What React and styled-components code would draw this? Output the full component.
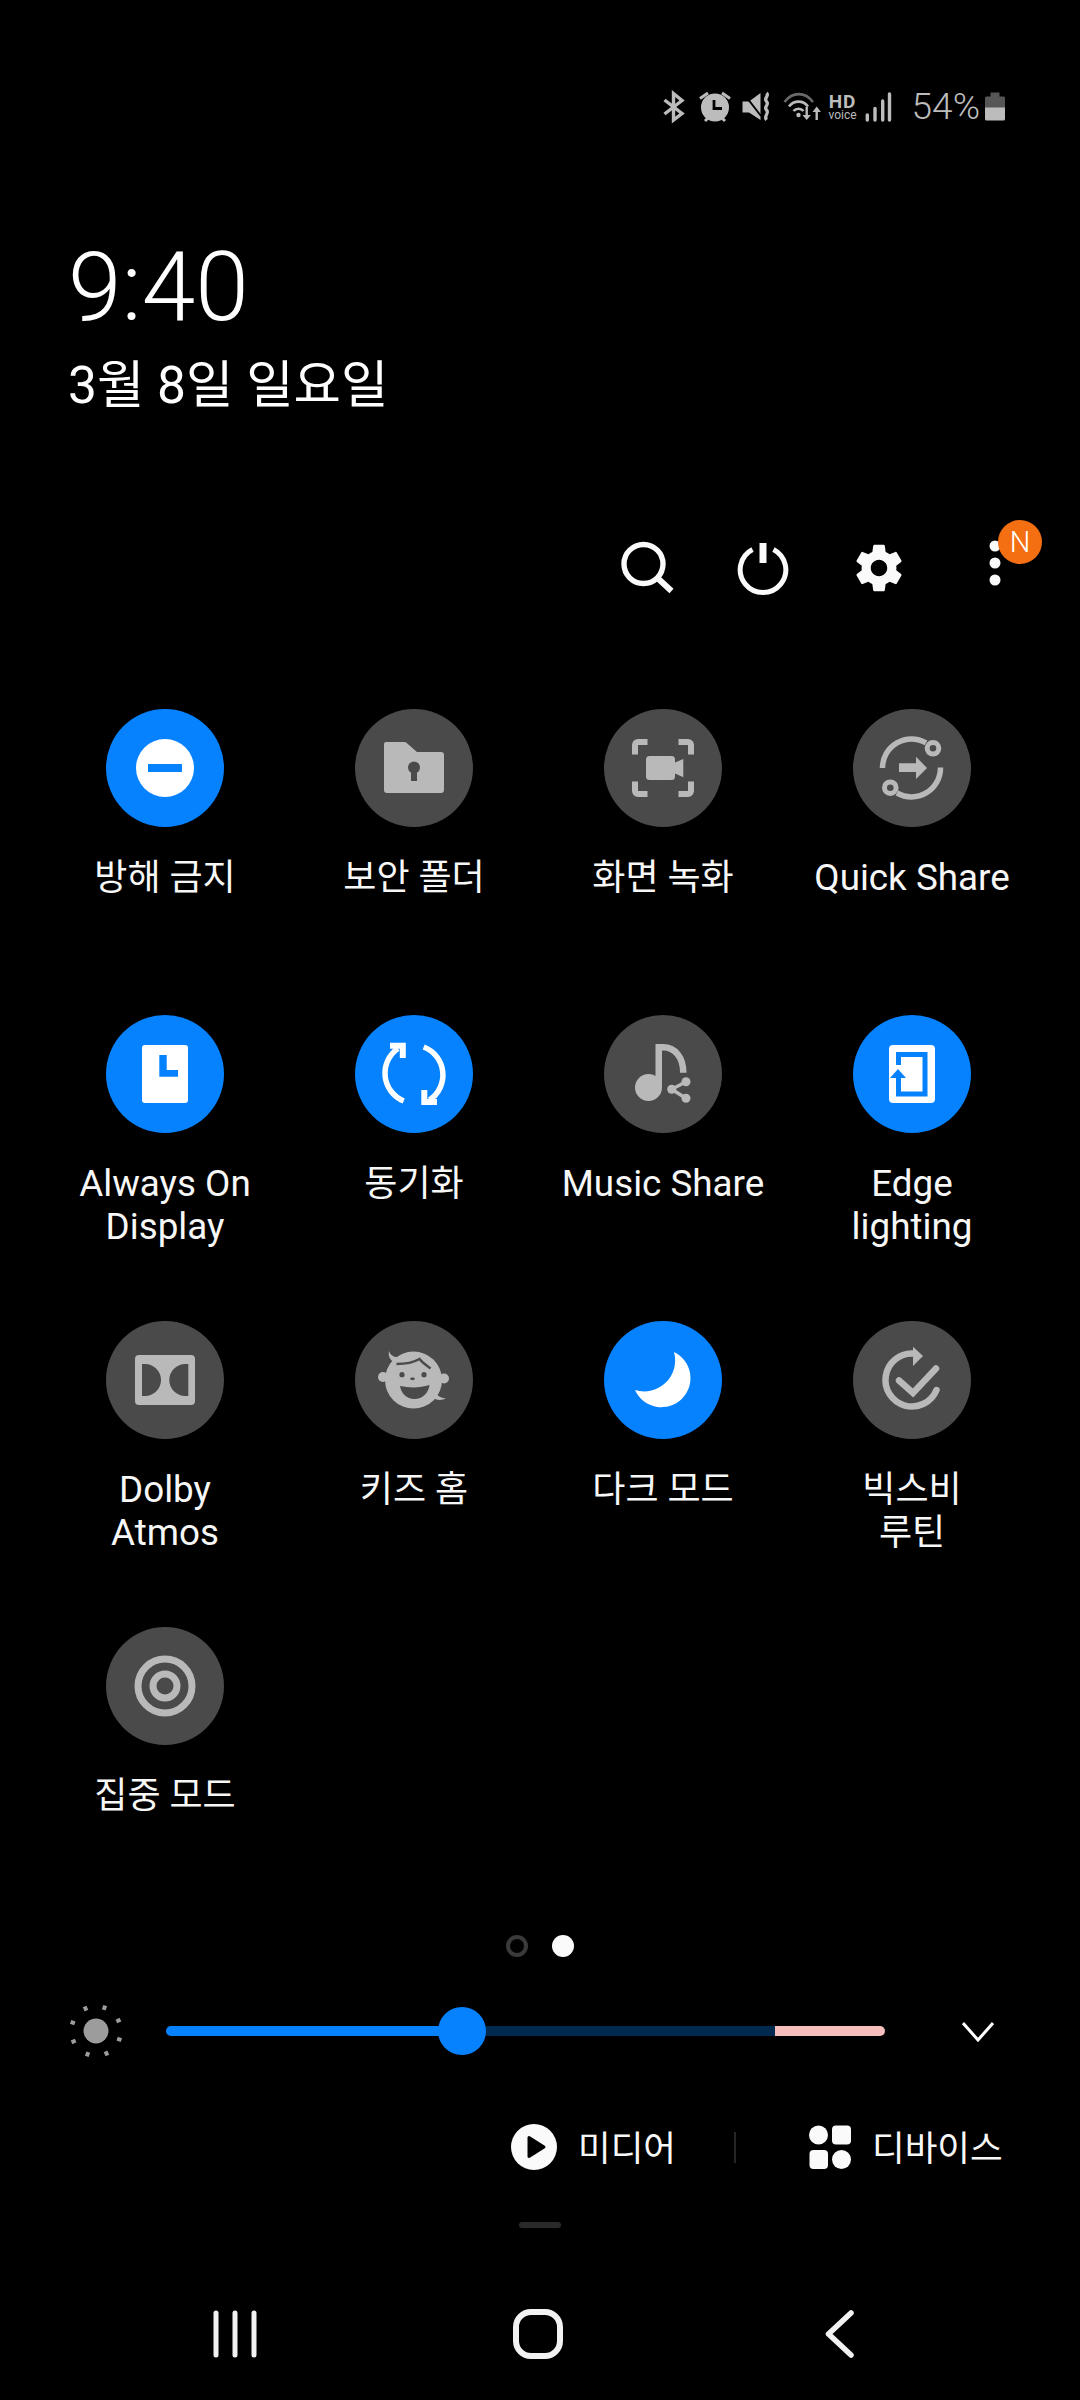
import React from "react"
import styled, { createGlobalStyle } from "styled-components"

const GRAY = "#b9b9b9"
const TILE_OFF = "#4a4a4a"
const BLUE = "#0782ff"
const STATUS = "#bcbcbc"

const GlobalStyle = createGlobalStyle`
  html, body {
    margin: 0;
    padding: 0;
    background: #000;
  }
  * {
    box-sizing: border-box;
  }
`

export default function App() {
  return (
    <>
      <GlobalStyle />
      <Page>
        <StatusBar>
          <StatusSvg $w={24} viewBox="0 0 24 40">
            <path d="M2.5 13 20 26.5 11.5 33V6.5L20 13.5 2.5 27" fill="none" stroke={STATUS} strokeWidth="3.4" />
          </StatusSvg>
          <StatusSvg $w={36} $ml={11} viewBox="0 0 36 40">
            <circle cx="18" cy="20.5" r="14" fill={STATUS} />
            <path d="M17 13v8.5h8" fill="none" stroke="#000" strokeWidth="2.8" />
            <path d="M3 11.5 11 6M33 11.5 25 6M8 34l3.5-3.5M28 34l-3.5-3.5" stroke={STATUS} strokeWidth="3" />
          </StatusSvg>
          <StatusSvg $w={32} $ml={8} viewBox="0 0 32 40">
            <path d="M1.500 14.500h6.500l11.500-8.500v27L8 25.500H1.500z" fill={STATUS} />
            <path d="M3 7 20 29" stroke="#000" strokeWidth="2" />
            <path d="M25.500 6c3.500 3-3.500 5 0 8.500s-3.500 5 0 8.500-3.500 5.500 0 10" fill="none" stroke={STATUS} strokeWidth="3.200" />
          </StatusSvg>
          <StatusSvg $w={38} $ml={10} viewBox="0 0 38 40">
            <path d="M1.500 15C9.500 4.500 22 4.500 30 15" fill="none" stroke="#6a6a6a" strokeWidth="2.6" />
            <path d="M6 19.500C11 13 20 13 25 19.500" fill="none" stroke={STATUS} strokeWidth="2.6" />
            <path d="M10.500 24C13 21 18 21 20.500 24" fill="none" stroke={STATUS} strokeWidth="2.6" />
            <circle cx="15.500" cy="28" r="2.200" fill={STATUS} />
            <path d="M23.700 20v11M33.700 33V22" stroke={STATUS} strokeWidth="2.4" />
            <path d="M19.500 28h8.400l-4.200 5zM29.500 25h8.400l-4.200-5.500z" fill={STATUS} />
          </StatusSvg>
          <HdBadge>
            <HdMain>HD</HdMain>
            <HdSub>voice</HdSub>
          </HdBadge>
          <StatusSvg $w={28} $ml={6} viewBox="0 0 28 40">
            <path d="M2.300 28v5M10 21.500V33M17.700 14V33M24.500 7V33" stroke={STATUS} strokeWidth="3.400" strokeLinecap="round" />
          </StatusSvg>
          <BatteryText>54%</BatteryText>
          <StatusSvg $w={22} $ml={4} viewBox="0 0 22 40">
            <path d="M6.500 5.500h9v4h4a1.500 1.500 0 0 1 1.500 1.500v10H1V11a1.500 1.500 0 0 1 1.500-1.500h4z" fill="#565656" />
            <path d="M1 20.500h20V32a1.500 1.500 0 0 1-1.500 1.500h-17A1.500 1.500 0 0 1 1 32z" fill={STATUS} />
          </StatusSvg>
        </StatusBar>

        <ClockBlock>
          <Time>9:40</Time>
          <DateLine>3월 8일 일요일</DateLine>
        </ClockBlock>

        <Toolbar>
          <ToolSlot>
            <svg width="60" height="60" viewBox="0 0 60 60">
              <circle cx="26.500" cy="26" r="19.500" fill="none" stroke="#fafafa" strokeWidth="5.400" />
              <path d="M41 40.500 54.500 53" stroke="#fafafa" strokeWidth="6" />
            </svg>
          </ToolSlot>
          <ToolSlot>
            <svg width="60" height="60" viewBox="0 0 60 60">
              <path d="M19.500 11.500a22.800 22.800 0 1 0 21 0" fill="none" stroke="#fafafa" strokeWidth="5" />
              <path d="M30 5v20" stroke="#fafafa" strokeWidth="7" />
            </svg>
          </ToolSlot>
          <ToolSlot>
            <svg width="58" height="58" viewBox="0 0 24 24">
              <path
                fill="#fafafa"
                d="M19.140 12.940c.04-.3.06-.61.06-.94 0-.32-.02-.64-.07-.94l2.030-1.580c.18-.14.23-.41.12-.61l-1.920-3.320c-.12-.22-.37-.29-.59-.22l-2.390.96c-.5-.38-1.030-.7-1.620-.94l-.36-2.540c-.04-.24-.24-.41-.48-.41h-3.840c-.24 0-.43.17-.47.41l-.36 2.540c-.59.24-1.130.57-1.620.94l-2.390-.96c-.22-.08-.47 0-.59.22L2.740 8.870c-.12.21-.08.47.12.61l2.030 1.580c-.05.3-.09.63-.09.94s.02.64.07.94l-2.030 1.580c-.18.14-.23.41-.12.61l1.920 3.320c.12.22.37.29.59.22l2.390-.96c.5.38 1.030.7 1.620.94l.36 2.540c.05.24.24.41.48.41h3.840c.24 0 .44-.17.47-.41l.36-2.540c.59-.24 1.130-.56 1.620-.94l2.390.96c.22.08.47 0 .59-.22l1.920-3.320c.12-.22.07-.47-.12-.61l-2.010-1.580zM12 15.400c-1.880 0-3.400-1.520-3.400-3.400s1.520-3.400 3.400-3.400 3.400 1.520 3.400 3.400-1.520 3.400-3.400 3.400z"
              />
            </svg>
          </ToolSlot>
          <ToolSlot>
            <svg width="12" height="60" viewBox="0 0 12 60">
              <circle cx="6" cy="8" r="5.500" fill="#fafafa" />
              <circle cx="6" cy="25" r="5.500" fill="#fafafa" />
              <circle cx="6" cy="42" r="5.500" fill="#fafafa" />
            </svg>
            <Badge>N</Badge>
          </ToolSlot>
        </Toolbar>

        <TileGrid>
          {tiles.map((tile) => (
            <Tile key={tile.lines.join(" ")}>
              <TileCircle $on={tile.on}>
                <svg width="118" height="118" viewBox="0 0 118 118">
                  {tile.icon}
                </svg>
              </TileCircle>
              <TileLabel $latin={tile.latin}>
                {tile.lines.map((line) => (
                  <TileLine key={line} $latin={tile.latin}>
                    {line}
                  </TileLine>
                ))}
              </TileLabel>
            </Tile>
          ))}
        </TileGrid>

        <PageDots>
          <PageDot />
          <PageDot $current />
        </PageDots>

        <BrightnessRow>
          <svg width="56" height="56" viewBox="0 0 56 56">
            <circle cx="28" cy="28" r="12.500" fill="#9c9c9c" />
            {[20, 65, 110, 155, 200, 245, 290, 335].map((deg) => (
              <rect key={deg} x="26" y="1" width="4" height="4.500" fill="#9c9c9c" transform={`rotate(${deg} 28 28)`} />
            ))}
          </svg>
          <Track>
            <TrackPart $w={296} $color={BLUE} />
            <TrackPart $w={313} $color="#00294f" />
            <TrackPart $w={110} $color="#f6bfbd" />
            <Thumb />
          </Track>
          <ChevronWrap>
            <svg width="32" height="20" viewBox="0 0 32 20">
              <path d="M1 1 16 18 31 1" fill="none" stroke="#fff" strokeWidth="3" />
            </svg>
          </ChevronWrap>
        </BrightnessRow>

        <MediaRow>
          <svg width="46" height="46" viewBox="0 0 46 46">
            <circle cx="23" cy="23" r="23" fill="#fafafa" />
            <path d="M18 13.500 33 23 18 32.500z" fill="#000" stroke="#000" strokeWidth="3" strokeLinejoin="round" />
          </svg>
          <MediaText>미디어</MediaText>
          <MediaDivider />
          <DeviceIcon>
            <svg width="42" height="44" viewBox="0 0 42 44">
              <circle cx="9.500" cy="10" r="9.500" fill="#fafafa" />
              <rect x="23" y="0.500" width="19" height="19" rx="4" fill="#fafafa" />
              <rect x="0.500" y="25" width="18.500" height="19" rx="4" fill="#fafafa" />
              <circle cx="32.500" cy="34.500" r="9.500" fill="#fafafa" />
            </svg>
          </DeviceIcon>
          <MediaText>디바이스</MediaText>
        </MediaRow>

        <Handle />

        <NavBar>
          <NavSlot>
            <svg width="44" height="50" viewBox="0 0 44 50">
              <path d="M3 4v42M22 4v42M41 4v42" stroke="#f2f2f2" strokeWidth="5" strokeLinecap="round" />
            </svg>
          </NavSlot>
          <NavSlot>
            <svg width="50" height="50" viewBox="0 0 50 50">
              <rect x="3" y="3" width="44" height="44" rx="15" fill="none" stroke="#f2f2f2" strokeWidth="6" />
            </svg>
          </NavSlot>
          <NavSlot>
            <svg width="30" height="50" viewBox="0 0 30 50">
              <path d="M26 4 3.500 25 26 46" fill="none" stroke="#f2f2f2" strokeWidth="5.500" strokeLinecap="round" strokeLinejoin="round" />
            </svg>
          </NavSlot>
        </NavBar>
      </Page>
    </>
  )
}

const Page = styled.div`
  width: 1080px;
  height: 2400px;
  background: #000;
  display: flex;
  flex-direction: column;
  overflow: hidden;
  font-family: Roboto, "Noto Sans CJK KR", sans-serif;
  color: #f7f7f7;
`

const StatusBar = styled.div`
  height: 214px;
  padding-right: 74px;
  display: flex;
  justify-content: flex-end;
  align-items: center;
`

const StatusSvg = styled.svg`
  width: ${(p) => p.$w}px;
  height: 40px;
  margin-left: ${(p) => p.$ml || 0}px;
  flex: none;
`

const HdBadge = styled.div`
  width: 32px;
  margin-left: 6px;
  display: flex;
  flex-direction: column;
  align-items: center;
  color: ${STATUS};
`

const HdMain = styled.span`
  font-size: 19px;
  line-height: 17px;
  font-weight: 700;
  letter-spacing: 1px;
`

const HdSub = styled.span`
  font-size: 12px;
  line-height: 11px;
`

const BatteryText = styled.span`
  margin-left: 19px;
  font-size: 37px;
  line-height: 40px;
  font-weight: 300;
  color: ${STATUS};
`

const ClockBlock = styled.div`
  padding-left: 68px;
  margin-top: 23px;
`

const Time = styled.div`
  font-size: 96.5px;
  line-height: 100px;
  font-weight: 300;
  color: #fff;
`

const DateLine = styled.div`
  margin-top: 19px;
  font-size: 51.5px;
  line-height: 60px;
  color: #fff;
`

const Toolbar = styled.div`
  margin-top: 94px;
  height: 116px;
  padding-right: 27px;
  display: flex;
  justify-content: flex-end;
`

const ToolSlot = styled.div`
  position: relative;
  width: 116px;
  height: 116px;
  display: flex;
  align-items: center;
  justify-content: center;
`

const Badge = styled.div`
  position: absolute;
  left: 61px;
  top: 10px;
  width: 44px;
  height: 44px;
  border-radius: 50%;
  background: #f36f12;
  color: #fff;
  font-size: 29px;
  font-weight: 300;
  line-height: 44px;
  text-align: center;
`

const TileGrid = styled.div`
  margin-top: 83px;
  margin-left: 40.5px;
  display: grid;
  grid-template-columns: repeat(4, 249px);
  grid-auto-rows: 306px;
  height: 1224px;
`

const Tile = styled.div`
  display: flex;
  flex-direction: column;
  align-items: center;
`

const TileCircle = styled.div`
  width: 118px;
  height: 118px;
  border-radius: 50%;
  flex: none;
  background: ${(p) => (p.$on ? BLUE : TILE_OFF)};

  svg {
    display: block;
  }
`

const TileLabel = styled.div`
  margin-top: ${(p) => (p.$latin ? 28.5 : 30)}px;
  text-align: center;
`

const TileLine = styled.div`
  font-size: ${(p) => (p.$latin ? 36.8 : 36)}px;
  line-height: 43px;
  white-space: nowrap;
`

const PageDots = styled.div`
  margin-top: 2px;
  height: 22px;
  display: flex;
  justify-content: center;
  gap: 24px;
`

const PageDot = styled.div`
  width: 22px;
  height: 22px;
  border-radius: 50%;
  background: ${(p) => (p.$current ? "#fafafa" : "transparent")};
  border: ${(p) => (p.$current ? "none" : "4px solid #3a3a3a")};
`

const BrightnessRow = styled.div`
  margin-top: 50px;
  height: 48px;
  padding-left: 68px;
  display: flex;
  align-items: center;
`

const Track = styled.div`
  position: relative;
  margin-left: 42px;
  width: 719px;
  height: 10px;
  border-radius: 5px;
  display: flex;
`

const TrackPart = styled.div`
  width: ${(p) => p.$w}px;
  height: 10px;
  background: ${(p) => p.$color};

  &:first-child {
    border-radius: 5px 0 0 5px;
  }

  &:nth-child(3) {
    border-radius: 0 5px 5px 0;
  }
`

const Thumb = styled.div`
  position: absolute;
  left: 272px;
  top: -19px;
  width: 48px;
  height: 48px;
  border-radius: 50%;
  background: ${BLUE};
`

const ChevronWrap = styled.div`
  margin-left: 77px;
  display: flex;
  margin-top: 2px;
`

const MediaRow = styled.div`
  margin-top: 67px;
  height: 50px;
  padding-left: 511px;
  display: flex;
  align-items: center;
`

const MediaText = styled.span`
  margin-left: 21px;
  padding-top: 4px;
  font-size: 35.5px;
  line-height: 50px;
  color: #f7f7f7;
`

const MediaDivider = styled.div`
  margin-left: 58px;
  width: 2px;
  height: 31px;
  background: #262626;
`

const DeviceIcon = styled.div`
  margin-left: 73px;
  display: flex;
`

const Handle = styled.div`
  margin: 50px 0 0 519px;
  width: 42px;
  height: 6px;
  border-radius: 3px;
  background: #2a2a2a;
`

const NavBar = styled.div`
  margin-top: 81px;
  height: 50px;
  padding-left: 84px;
  display: grid;
  grid-template-columns: repeat(3, 302.5px);
`

const NavSlot = styled.div`
  display: flex;
  justify-content: center;
  align-items: center;
`

const tiles = [
  {
    lines: ["방해 금지"],
    on: true,
    icon: (
      <>
        <circle cx="59" cy="59" r="29" fill="#fff" />
        <rect x="42" y="55" width="34" height="8" fill={BLUE} />
      </>
    ),
  },
  {
    lines: ["보안 폴더"],
    icon: (
      <>
        <path
          d="M31 33h18a4 4 0 0 1 3 1.300L62 43h24a3 3 0 0 1 3 3v35a3 3 0 0 1-3 3H32a3 3 0 0 1-3-3V35a2 2 0 0 1 2-2z"
          fill={GRAY}
        />
        <circle cx="59" cy="58.500" r="6" fill={TILE_OFF} />
        <rect x="56" y="60" width="6" height="12" fill={TILE_OFF} />
      </>
    ),
  },
  {
    lines: ["화면 녹화"],
    icon: (
      <>
        <path
          d="M43.500 33H34a3 3 0 0 0-3 3v9.500M74.500 33H84a3 3 0 0 1 3 3v9.500M43.500 85H34a3 3 0 0 1-3-3v-9.500M74.500 85H84a3 3 0 0 0 3-3v-9.500"
          fill="none"
          stroke={GRAY}
          strokeWidth="6"
        />
        <rect x="42" y="47" width="29" height="24" rx="3.500" fill={GRAY} />
        <path d="M71 53.500 79.300 50V68.300L71 64.500z" fill={GRAY} />
      </>
    ),
  },
  {
    lines: ["Quick Share"],
    latin: true,
    icon: (
      <>
        <path d="M29.500 59A29 29 0 0 1 73 33.800" fill="none" stroke={GRAY} strokeWidth="5.500" />
        <path d="M87.500 58.500A29 29 0 0 1 44 84" fill="none" stroke={GRAY} strokeWidth="5.500" />
        <circle cx="80" cy="39.300" r="5.800" fill="none" stroke={GRAY} strokeWidth="5" />
        <circle cx="37.300" cy="78.700" r="5.800" fill="none" stroke={GRAY} strokeWidth="5" />
        <path d="M46 54.300h17v-6.600L74 59 63 70v-7H46z" fill={GRAY} />
      </>
    ),
  },
  {
    lines: ["Always On", "Display"],
    latin: true,
    on: true,
    icon: (
      <>
        <rect x="36" y="30" width="46" height="58" rx="3" fill="#fff" />
        <path d="M53.300 40h7.400v15H72v6.700H53.300z" fill={BLUE} />
      </>
    ),
  },
  {
    lines: ["동기화"],
    on: true,
    icon: (
      <>
        <path d="M48.700 86A30 30 0 0 1 43 33.500" fill="none" stroke="#fff" strokeWidth="5.500" />
        <path d="M68.700 32A30 30 0 0 1 74.500 85" fill="none" stroke="#fff" strokeWidth="5.500" />
        <path d="M35 30.700H47.800V43" fill="none" stroke="#fff" strokeWidth="6" />
        <path d="M69.300 75V87H82" fill="none" stroke="#fff" strokeWidth="6" />
      </>
    ),
  },
  {
    lines: ["Music Share"],
    latin: true,
    icon: (
      <>
        <circle cx="44.500" cy="72.500" r="13.500" fill={GRAY} />
        <rect x="51.500" y="29" width="6.500" height="42" fill={GRAY} />
        <path d="M54 32.300h5c12 0 20.300 10 20.300 25.500" fill="none" stroke={GRAY} strokeWidth="6.500" />
        <path d="M82 66.700 67.700 74.300 82 83.300" fill="none" stroke={GRAY} strokeWidth="3.500" />
        <circle cx="67.700" cy="74.300" r="4.500" fill={GRAY} />
        <circle cx="82" cy="66.700" r="4.500" fill={GRAY} />
        <circle cx="82" cy="83.300" r="4.500" fill={GRAY} />
      </>
    ),
  },
  {
    lines: ["Edge", "lighting"],
    latin: true,
    on: true,
    icon: (
      <>
        <rect x="36" y="30" width="46" height="58" rx="4" fill="#fff" />
        <path d="M45.500 50V39.500H72V79H45.500V60" fill="none" stroke={BLUE} strokeWidth="5" />
        <path d="M45 54 37 63H53z" fill={BLUE} />
      </>
    ),
  },
  {
    lines: ["Dolby", "Atmos"],
    latin: true,
    icon: (
      <>
        <rect x="29" y="34" width="60" height="50" rx="4" fill={GRAY} />
        <path d="M36 43h3a16 16 0 0 1 0 32h-3z" fill={TILE_OFF} />
        <path d="M82.300 43h-3a16 16 0 0 0 0 32h3z" fill={TILE_OFF} />
      </>
    ),
  },
  {
    lines: ["키즈 홈"],
    icon: (
      <>
        <circle cx="58.500" cy="59" r="28.500" fill={GRAY} />
        <circle cx="28" cy="56" r="5" fill={GRAY} />
        <circle cx="89" cy="57.500" r="5" fill={GRAY} />
        <path d="M34 30c1.500 4 4 6 9 6l-5 5c-3-3-5-6-4-11z" fill={GRAY} />
        <path d="M80 70c2 5 6 7 11 7.500-4 2-10 2-14-1z" fill={GRAY} />
        <path d="M41.500 43c8 0 16-1 23-5 3 4 7 6 11 9.500" fill="none" stroke={TILE_OFF} strokeWidth="2.500" />
        <circle cx="47" cy="53.700" r="2.600" fill={TILE_OFF} />
        <circle cx="69" cy="53.700" r="2.600" fill={TILE_OFF} />
        <ellipse cx="57.500" cy="57.800" rx="2.400" ry="1.400" fill={TILE_OFF} />
        <path d="M45 65c10 2 20 2 29.500-1-1 8-7 14-15 14s-13.500-6-14.500-13z" fill={TILE_OFF} />
      </>
    ),
  },
  {
    lines: ["다크 모드"],
    on: true,
    icon: <path d="M70 31A29 29 0 1 1 31 69 31 31 0 0 0 70 31z" fill="#fff" />,
  },
  {
    lines: ["빅스비", "루틴"],
    icon: (
      <>
        <path d="M60 32.500A26.500 26.500 0 1 0 83.500 69" fill="none" stroke={GRAY} strokeWidth="6.500" strokeLinecap="round" />
        <path d="M60 25.700 70 35 60 45z" fill={GRAY} />
        <path d="M46 59.500 60 72 83 47.500" fill="none" stroke={GRAY} strokeWidth="6.500" strokeLinecap="round" />
      </>
    ),
  },
  {
    lines: ["집중 모드"],
    icon: (
      <>
        <circle cx="59" cy="59" r="27" fill="none" stroke={GRAY} strokeWidth="7" />
        <circle cx="59" cy="59" r="12" fill="none" stroke={GRAY} strokeWidth="7" />
      </>
    ),
  },
]
